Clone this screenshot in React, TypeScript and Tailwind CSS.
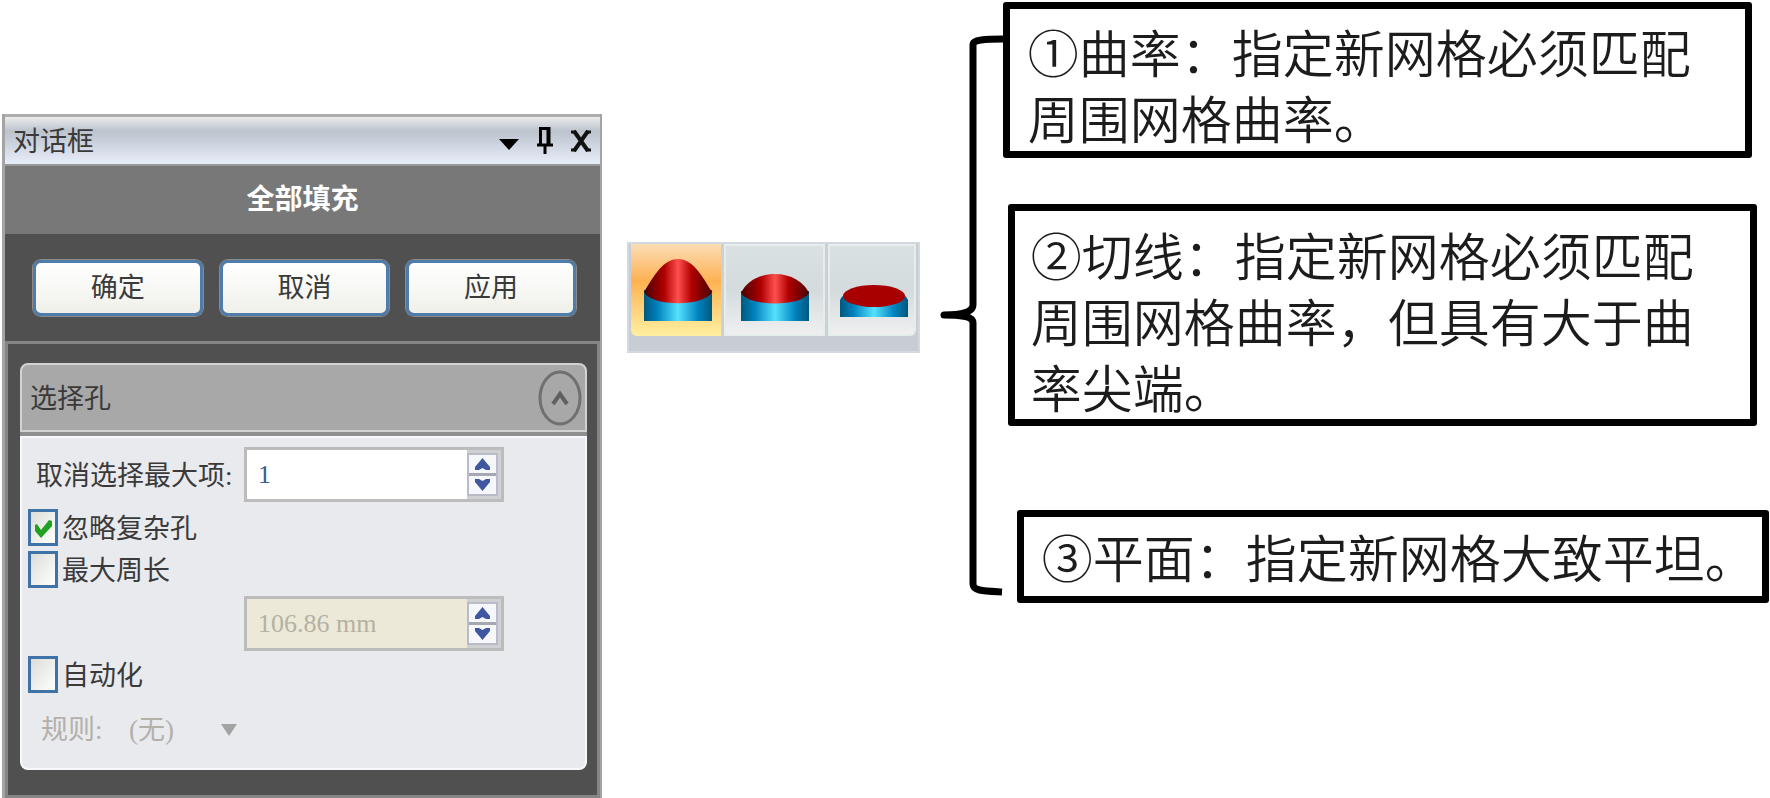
import { useId, useState } from "react";

const NOTES = [
  {
    text: "①曲率：指定新网格必须匹配周围网格曲率。",
    className: "mr-[18px] pt-[9px] pb-px pl-[18px] pr-10",
  },
  {
    text: "②切线：指定新网格必须匹配周围网格曲率，但具有大于曲率尖端。",
    className: "mt-[46px] ml-[5px] mr-[13px] pt-[10px] pl-4 pr-10",
  },
  {
    text: "③平面：指定新网格大致平坦。",
    className: "mt-[84px] ml-[14px] mr-px pt-[6px] pb-[7px] pl-[18px]",
  },
];

export default function App() {
  return (
    <main className="flex items-start bg-white font-['Liberation_Serif','Noto_Sans_CJK_SC',sans-serif] text-[27px] leading-9 text-[#3a3a3a]">
      <div className="w-[34%] shrink-0 pt-[114px] pl-0.5">
        <DialogPanel />
      </div>
      <FillModes />
      <Brace />
      <section className="min-w-0 flex-1 pt-0.5" aria-label="说明">
        {NOTES.map((note) => (
          <p
            key={note.text}
            className={`rounded-[3px] border-[7px] border-black font-['Noto_Sans_CJK_SC',sans-serif] text-[51px] leading-[66px] font-[350] text-[#1c1c1c] ${note.className}`}
          >
            {note.text}
          </p>
        ))}
      </section>
    </main>
  );
}

function DialogPanel() {
  const [count, setCount] = useState(1);
  const [open, setOpen] = useState(true);

  return (
    <section className="border-r-2 border-l-[3px] border-[#a4a4a4] bg-[#505050]">
      <header className="flex h-[50px] items-center border-t-[3px] border-[#adadad] bg-linear-to-b from-[#ececec] via-[#bcc3cd] via-30% to-[#e8edfa] pr-2 pl-2">
        <h1 className="flex-1 pt-0.5">对话框</h1>
        <button type="button" aria-label="菜单" className="mr-4">
          <svg width="22" height="26" viewBox="0 0 22 26">
            <path d="M1 11h20L11 22z" fill="#000" />
          </svg>
        </button>
        <button type="button" aria-label="固定" className="mr-4">
          <svg width="18" height="30" viewBox="0 0 18 30">
            <path d="M4.500 18V2.500H13V18M12 3v15M1 19h16M9 19v9" fill="none" stroke="#000" strokeWidth="3" />
          </svg>
        </button>
        <button type="button" aria-label="关闭">
          <svg width="22" height="26" viewBox="0 0 22 26">
            <path d="M4 3l14 20M18 3L4 23" fill="none" stroke="#111" strokeWidth="4" />
            <path d="M1 4h5M16 4h5M1 22h5M16 22h5" stroke="#111" strokeWidth="3" />
          </svg>
        </button>
      </header>

      <h2 className="h-[70px] border-t-2 border-[#989898] bg-[#787878] pt-4 text-center text-[28px] font-bold text-white">
        全部填充
      </h2>

      <div className="flex gap-[17px] pt-[26px] pr-6 pb-[25px] pl-7">
        <PanelButton label="确定" />
        <PanelButton label="取消" />
        <PanelButton label="应用" />
      </div>

      <div className="border-[3px] border-[#858585] pt-[19px] pr-[10px] pb-[25px] pl-3">
        <div className="flex h-[69px] items-center rounded-t-lg border-2 border-[#d2d2d2] bg-[#a8a8a8] pr-[3px] pl-2">
          <h3 className="flex-1 pt-0.5">选择孔</h3>
          <button type="button" aria-label="折叠" aria-expanded={open} onClick={() => setOpen(!open)}>
            <svg width="44" height="56" viewBox="0 0 44 56">
              <ellipse cx="22" cy="28" rx="20" ry="26" fill="none" stroke="#707070" strokeWidth="3" />
              <path d="M15 34l7-10 7 10" fill="none" stroke="#606060" strokeWidth="4" />
            </svg>
          </button>
        </div>
        {open && (
          <div className="rounded-b-lg border-t-4 border-[#8e8e8e] bg-[#f7f8fb] p-0.5">
            <div className="flex flex-col rounded-b-md bg-[#e9eaee] pt-[9px] pr-[5px] pb-[19px] pl-[6px]">
              <div className="flex items-center pl-2">
                <label htmlFor="max-items" className="w-[208px] pt-0.5 whitespace-nowrap">
                  取消选择最大项:
                </label>
                <SpinBox
                  id="max-items"
                  value={String(count)}
                  onChange={(v) => setCount(Number(v) || 0)}
                  onStep={(d) => setCount(count + d)}
                />
              </div>
              <div className="mt-[7px] flex flex-col gap-[5px]">
                <Check label="忽略复杂孔" defaultChecked />
                <Check label="最大周长" />
              </div>
              <div className="mt-2 mb-[5px] pl-[216px]">
                <SpinBox id="max-length" label="最大周长值" value="106.86 mm" disabled />
              </div>
              <Check label="自动化" />
              <div className="mt-[18px] flex h-[38px] items-center pl-[13px] text-[#b3b0aa]">
                <label htmlFor="rule" className="w-[88px]">
                  规则:
                </label>
                <select id="rule" disabled className="w-[92px] appearance-none bg-transparent opacity-100">
                  <option>(无)</option>
                </select>
                <svg width="16" height="12" viewBox="0 0 16 12">
                  <path d="M0 0h16L8 12z" fill="#a3a3a3" />
                </svg>
              </div>
            </div>
          </div>
        )}
      </div>
    </section>
  );
}

function PanelButton({ label }: { label: string }) {
  return (
    <button
      type="button"
      className="h-14 flex-1 rounded-lg border-[3px] border-[#4f7cab] bg-linear-to-b from-white to-[#f0f0ea] ring-1 ring-[#8b8b8b]"
    >
      {label}
    </button>
  );
}

function SpinBox({
  id,
  label,
  value,
  disabled = false,
  onChange,
  onStep,
}: {
  id: string;
  label?: string;
  value: string;
  disabled?: boolean;
  onChange?: (value: string) => void;
  onStep?: (delta: number) => void;
}) {
  return (
    <div className="flex h-[55px] w-[260px] border-[3px] border-[#bcbcbc] bg-[#cfd0d2]">
      <input
        id={id}
        aria-label={label}
        value={value}
        disabled={disabled}
        onChange={(e) => onChange?.(e.target.value)}
        className="min-w-0 flex-1 bg-white pl-[11px] text-[26px] text-[#35608c] disabled:bg-[#ece9d8] disabled:text-[#b5b1a2]"
      />
      <div className="my-[3px] mr-[3px] flex flex-col gap-[3px] border-2 border-[#b9bcc8] bg-[#a5a8b0]">
        <button
          type="button"
          aria-label="增加"
          disabled={disabled}
          onClick={() => onStep?.(1)}
          className="flex flex-1 items-center justify-center bg-[#f6f7fb] px-[6px]"
        >
          <svg width="15" height="12" viewBox="0 0 15 12">
            <path d="M7.500 0L15 9v3h-4L7.500 10 4 12H0V9z" fill="#3f56a0" />
          </svg>
        </button>
        <button
          type="button"
          aria-label="减少"
          disabled={disabled}
          onClick={() => onStep?.(-1)}
          className="flex flex-1 items-center justify-center bg-[#f6f7fb] px-[6px]"
        >
          <svg width="15" height="12" viewBox="0 0 15 12">
            <path d="M7.500 12L15 3V0h-4L7.500 2 4 0H0v3z" fill="#3f56a0" />
          </svg>
        </button>
      </div>
    </div>
  );
}

function Check({ label, defaultChecked = false }: { label: string; defaultChecked?: boolean }) {
  const id = useId();
  return (
    <div className="flex h-[37px] items-center">
      <span className="relative mr-1 h-[37px] w-[30px]">
        <input
          id={id}
          type="checkbox"
          defaultChecked={defaultChecked}
          className="peer block h-full w-full appearance-none border-[3px] border-[#3f73a8] bg-linear-to-br from-[#dcdcd8] to-white"
        />
        <svg
          viewBox="0 0 30 37"
          className="pointer-events-none absolute inset-0 hidden peer-checked:block"
        >
          <path d="M7 16l2-1 4 6 8-10 3 1v5L13 29 7 22z" fill="#21a121" />
        </svg>
      </span>
      <label htmlFor={id} className="pt-0.5">
        {label}
      </label>
    </div>
  );
}

function FillModes() {
  return (
    <div className="mt-[242px] ml-[25px] shrink-0 border-2 border-[#d3d9e0] bg-[#c8ccd5] px-0.5 pb-[15px]">
      <div className="flex gap-[3px] rounded-b-md bg-[#c9d1d5]">
        <button
          type="button"
          aria-label="曲率"
          aria-pressed="true"
          className="rounded-bl-md bg-linear-to-b from-[#fbdcb4] via-[#fdb250] via-40% to-[#fff0a0]"
        >
          <svg width="90" height="92" viewBox="0 0 90 92">
            <Gradients />
            <path d="M13 46h68v31H13z" fill="url(#base)" />
            <path d="M13 48C23 32 32 15 47 15s24 17 34 33C73 63 21 63 13 48z" fill="url(#cap)" />
          </svg>
        </button>
        <button
          type="button"
          aria-label="切线"
          aria-pressed="false"
          className="border-2 border-[#e7eced] bg-linear-to-b from-[#d9e1e3] via-[#d4dbdd] to-[#efefef]"
        >
          <svg width="97" height="88" viewBox="0 0 97 88">
            <path d="M15 45h68v30H15z" fill="url(#base)" />
            <path d="M15 47C20 36 33 28 49 28s29 8 34 19C75 61 23 61 15 47z" fill="url(#cap)" />
          </svg>
        </button>
        <button
          type="button"
          aria-label="平面"
          aria-pressed="false"
          className="rounded-br-md border-2 border-[#e7eced] bg-linear-to-b from-[#d9e1e3] via-[#d4dbdd] to-[#efefef]"
        >
          <svg width="84" height="88" viewBox="0 0 84 88">
            <path d="M10 54q2-6 12-8h44q10 2 12 8v17H10z" fill="url(#base)" />
            <ellipse cx="44" cy="50" rx="31" ry="11" fill="#a80000" />
          </svg>
        </button>
      </div>
    </div>
  );
}

function Gradients() {
  return (
    <defs>
      <linearGradient id="base">
        <stop offset="0" stopColor="#00577c" />
        <stop offset="0.2" stopColor="#0082be" />
        <stop offset="0.5" stopColor="#55e2ff" />
        <stop offset="0.8" stopColor="#0082be" />
        <stop offset="1" stopColor="#00577c" />
      </linearGradient>
      <linearGradient id="cap">
        <stop offset="0" stopColor="#4a0000" />
        <stop offset="0.3" stopColor="#b00000" />
        <stop offset="0.5" stopColor="#ff5050" />
        <stop offset="0.7" stopColor="#b00000" />
        <stop offset="1" stopColor="#4a0000" />
      </linearGradient>
    </defs>
  );
}

function Brace() {
  return (
    <svg width="63" height="600" viewBox="0 0 63 600" className="ml-5 shrink-0" aria-hidden="true">
      <path
        d="M63 39C45 39 33 40 33 44V305C33 312 22 315 4 315C22 315 33 316 33 323V584C33 591 44 591 62 592"
        fill="none"
        stroke="#000"
        strokeWidth="7"
        strokeLinejoin="round"
      />
    </svg>
  );
}
